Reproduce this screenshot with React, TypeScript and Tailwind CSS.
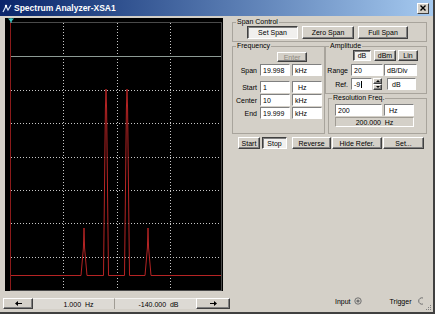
import React from "react";

const font = { fontFamily: '"Liberation Sans", Arial, sans-serif' };

function Btn({
  children,
  className = "",
  pressed = false,
  disabled = false,
}: {
  children: React.ReactNode;
  className?: string;
  pressed?: boolean;
  disabled?: boolean;
}) {
  return (
    <div
      className={
        "flex shrink-0 items-center justify-center border text-[7px] leading-none " +
        (pressed
          ? "border-t-[#404040] border-l-[#404040] border-r-white border-b-white bg-[#f1f0ee] shadow-[inset_1px_1px_#808080] "
          : "border-t-white border-l-white border-r-[#404040] border-b-[#404040] bg-[#d4d0c8] shadow-[inset_-1px_-1px_#808080] ") +
        (disabled ? "text-[#8e8a82] " : "text-black ") +
        className
      }
    >
      {children}
    </div>
  );
}

function Field({
  children,
  className = "",
}: {
  children?: React.ReactNode;
  className?: string;
}) {
  return (
    <div
      className={
        "flex shrink-0 items-center border border-t-[#808080] border-l-[#808080] border-r-white border-b-white bg-white pl-[2px] text-[7px] leading-none text-black " +
        className
      }
    >
      {children}
    </div>
  );
}

function Legend({ children }: { children: React.ReactNode }) {
  return (
    <legend className="ml-[3px] px-[1px] text-[7px] leading-[8px] text-black">
      {children}
    </legend>
  );
}

function Spectrum() {
  const vx = [58, 112, 165];
  const hy = [72, 105, 139, 172, 205, 239];
  const peaks = [
    { x: 79, top: 210, w: 3 },
    { x: 101, top: 71, w: 2.5 },
    { x: 122, top: 71, w: 2.5 },
    { x: 143, top: 210, w: 3 },
  ];
  return (
    <svg width="218" height="273" viewBox="0 0 218 273" className="block">
      <rect width="218" height="273" fill="#000" />
      <rect x="5.5" y="4.5" width="211" height="268" fill="none" stroke="#4a4a4a" />
      {vx.map((x) => (
        <line
          key={x}
          x1={x + 0.5}
          y1={5}
          x2={x + 0.5}
          y2={272}
          stroke="#c8c8c8"
          strokeDasharray="1 2"
        />
      ))}
      {hy.map((y) => (
        <line
          key={y}
          x1={6}
          y1={y + 0.5}
          x2={216}
          y2={y + 0.5}
          stroke="#c8c8c8"
          strokeDasharray="1 2"
        />
      ))}
      <line x1={6} y1={38.5} x2={216} y2={38.5} stroke="#8c9a94" />
      <line x1={5.5} y1={4} x2={5.5} y2={272} stroke="#8a1a1a" />
      <polygon points="3,0.5 9,0.5 6,4" fill="#3fc6c6" />
      <line x1={6} y1={0} x2={6} y2={5} stroke="#3fc6c6" />
      <path
        d={
          "M6 257.5 " +
          peaks
            .map(
              (p) =>
                `L${p.x - p.w} 257.5 L${p.x - 0.6} ${p.top + 20} L${p.x} ${p.top} L${p.x + 0.6} ${p.top + 20} L${p.x + p.w} 257.5`
            )
            .join(" ") +
          " L216 257.5"
        }
        fill="none"
        stroke="#b52424"
        strokeWidth="1"
      />
    </svg>
  );
}

function Arrow({ dir }: { dir: "left" | "right" }) {
  return (
    <svg width="7" height="5" viewBox="0 0 7 5" className={dir === "right" ? "rotate-180" : ""}>
      <path d="M0 2.5 L3 0 L3 2 L7 2 L7 3 L3 3 L3 5 Z" fill="#000" />
    </svg>
  );
}

export default function App() {
  return (
    <div
      className="relative flex h-[314px] w-[435px] flex-col overflow-hidden border-r-2 border-b-2 border-r-[#404040] border-b-[#404040] bg-[#d4d0c8]"
      style={font}
    >
      {/* title bar */}
      <div className="flex h-[16px] shrink-0 items-center bg-gradient-to-r from-[#0a246a] to-[#a6caf0] pl-[2px] pr-[2px]">
        <svg width="10" height="9" viewBox="0 0 10 9" className="mr-[2px]">
          <path d="M1 8 L4 2 L6 6 L9 1" fill="none" stroke="#d8e4f4" strokeWidth="1.2" />
          <circle cx="4" cy="2" r="1.2" fill="#ffffff" />
        </svg>
        <span className="text-[8.5px] font-bold leading-none text-white">
          Spectrum Analyzer-XSA1
        </span>
        <div className="ml-auto mr-[2px] flex h-[11px] w-[12px] items-center justify-center border border-t-white border-l-white border-r-[#404040] border-b-[#404040] bg-[#d4d0c8]">
          <svg width="6" height="6" viewBox="0 0 6 6">
            <path d="M0.5 0.5 L5.5 5.5 M5.5 0.5 L0.5 5.5" stroke="#000" strokeWidth="1.4" />
          </svg>
        </div>
      </div>

      <div className="flex flex-1 pl-[3px] pt-[2px]">
        {/* left: display */}
        <div className="flex w-[227px] shrink-0 flex-col">
          <div className="ml-[2px]">
            <Spectrum />
          </div>
          <div className="mt-[7px] flex h-[11px] text-[7px] leading-none">
            <Btn className="h-[11px] w-[30px]">
              <Arrow dir="left" />
            </Btn>
            <div className="flex w-[82px] items-center justify-center border-t border-r border-t-[#f4f3f1] border-r-[#a09c94] bg-[#dddad4] pl-[10px]">
              1.000&nbsp;&nbsp;Hz
            </div>
            <div className="flex w-[81px] items-center justify-center border-t border-t-[#f4f3f1] bg-[#dddad4] pl-[6px]">
              -140.000&nbsp;&nbsp;dB
            </div>
            <Btn className="h-[11px] w-[34px]">
              <Arrow dir="right" />
            </Btn>
          </div>
        </div>

        {/* right: controls */}
        <div className="ml-[2px] flex w-[195px] shrink-0 flex-col">
          <fieldset className="h-[24px] border border-[#a8a49c]">
            <Legend>Span Control</Legend>
            <div className="flex gap-[4px] pl-[14px]">
              <Btn pressed className="h-[13px] w-[51px]">Set Span</Btn>
              <Btn className="h-[13px] w-[52px]">Zero Span</Btn>
              <Btn className="h-[13px] w-[50px]">Full Span</Btn>
            </div>
          </fieldset>

          <div className="flex">
            <fieldset className="h-[92px] w-[93px] shrink-0 border border-[#a8a49c]">
              <Legend>Frequency</Legend>
              <Btn disabled className="ml-[44px] mt-[2px] h-[10px] w-[30px]">
                Enter
              </Btn>
              <div className="mt-[2px] flex flex-col">
                {[
                  { l: "Span", v: "19.998", u: "kHz", gap: "" },
                  { l: "Start", v: "1", u: "Hz", gap: "mt-[5px]" },
                  { l: "Center", v: "10", u: "kHz", gap: "mt-[1px]" },
                  { l: "End", v: "19.999", u: "kHz", gap: "mt-[1px]" },
                ].map((r) => (
                  <div key={r.l} className={"flex h-[12px] items-center " + r.gap}>
                    <span className="w-[25px] pr-[1px] text-right text-[7px] leading-none">
                      {r.l}
                    </span>
                    <Field className="ml-[2px] h-[12px] w-[30px]">{r.v}</Field>
                    <Field
                      className={
                        "ml-[2px] h-[12px] w-[30px] " + (r.u === "Hz" ? "pl-[5px]" : "")
                      }
                    >
                      {r.u}
                    </Field>
                  </div>
                ))}
              </div>
            </fieldset>

            <div className="flex w-[102px] shrink-0 flex-col">
              <fieldset className="h-[52px] border border-[#a8a49c]">
                <Legend>Amplitude</Legend>
                <div className="flex justify-end pr-[8px]">
                  <Btn pressed className="h-[11px] w-[18px]">dB</Btn>
                  <Btn className="ml-[3px] h-[11px] w-[22px]">dBm</Btn>
                  <Btn className="ml-[2px] h-[11px] w-[20px]">Lin</Btn>
                </div>
                <div className="mt-[3px] flex h-[12px] items-center">
                  <span className="w-[22px] text-right text-[7px] leading-none">Range</span>
                  <Field className="ml-[3px] h-[12px] w-[32px]">20</Field>
                  <Field className="ml-[1px] h-[12px] w-[33px]">dB/Div</Field>
                </div>
                <div className="mt-[2px] flex h-[12px] items-center">
                  <span className="w-[22px] text-right text-[7px] leading-none">Ref.</span>
                  <Field className="ml-[3px] h-[12px] w-[21px]">
                    -9<span className="ml-[1px] inline-block h-[7px] w-px bg-black" />
                  </Field>
                  <div className="ml-[1px] flex h-[12px] w-[9px] flex-col">
                    <Btn className="h-[6px] w-[9px]">
                      <svg width="4" height="2" viewBox="0 0 4 2">
                        <path d="M0 2 L2 0 L4 2 Z" fill="#000" />
                      </svg>
                    </Btn>
                    <Btn className="h-[6px] w-[9px]">
                      <svg width="4" height="2" viewBox="0 0 4 2">
                        <path d="M0 0 L2 2 L4 0 Z" fill="#000" />
                      </svg>
                    </Btn>
                  </div>
                  <Field className="ml-[5px] h-[12px] w-[29px] pl-[4px]">dB</Field>
                </div>
              </fieldset>
              <fieldset className="ml-[3px] h-[40px] border border-[#a8a49c]">
                <Legend>Resolution Freq.</Legend>
                <div className="mt-[2px] flex pl-[6px]">
                  <Field className="h-[12px] w-[47px]">200</Field>
                  <Field className="ml-[2px] h-[12px] w-[30px] pl-[4px]">Hz</Field>
                </div>
                <div className="ml-[6px] mt-[1px] flex h-[10px] w-[79px] items-center justify-center border border-t-[#a09c94] border-l-[#a09c94] border-r-white border-b-white text-[7px] leading-none">
                  200.000&nbsp;&nbsp;Hz
                </div>
              </fieldset>
            </div>
          </div>

          <div className="ml-[6px] mt-[3px] flex">
            <Btn className="h-[12px] w-[22px]">Start</Btn>
            <Btn pressed className="ml-[2px] h-[12px] w-[25px]">Stop</Btn>
            <Btn className="ml-[5px] h-[12px] w-[39px]">Reverse</Btn>
            <Btn className="ml-[1px] h-[12px] w-[50px]">Hide Refer.</Btn>
            <Btn className="ml-[1px] h-[12px] w-[41px]">Set...</Btn>
          </div>

          <div className="mt-auto mb-[6px] flex h-[10px] items-center text-[7px] leading-none">
            <span className="ml-[103px]">Input</span>
            <svg width="8" height="8" viewBox="0 0 8 8" className="ml-[3px]">
              <circle cx="4" cy="4" r="3.2" fill="none" stroke="#707070" />
              <circle cx="4" cy="4" r="1.6" fill="#707070" />
            </svg>
            <span className="ml-[28px]">Trigger</span>
            <svg width="8" height="8" viewBox="0 0 8 8" className="ml-[5px]">
              <path d="M6 1 A3.2 3.2 0 1 0 6 7" fill="none" stroke="#707070" />
            </svg>
          </div>
        </div>
      </div>

      {/* resize grip */}
      <svg width="6" height="6" viewBox="0 0 6 6" className="absolute right-[1px] bottom-[1px]">
        <rect x="4" y="0" width="1" height="1" fill="#808080" />
        <rect x="2" y="2" width="1" height="1" fill="#808080" />
        <rect x="4" y="2" width="1" height="1" fill="#808080" />
        <rect x="0" y="4" width="1" height="1" fill="#808080" />
        <rect x="2" y="4" width="1" height="1" fill="#808080" />
        <rect x="4" y="4" width="1" height="1" fill="#808080" />
      </svg>
    </div>
  );
}
